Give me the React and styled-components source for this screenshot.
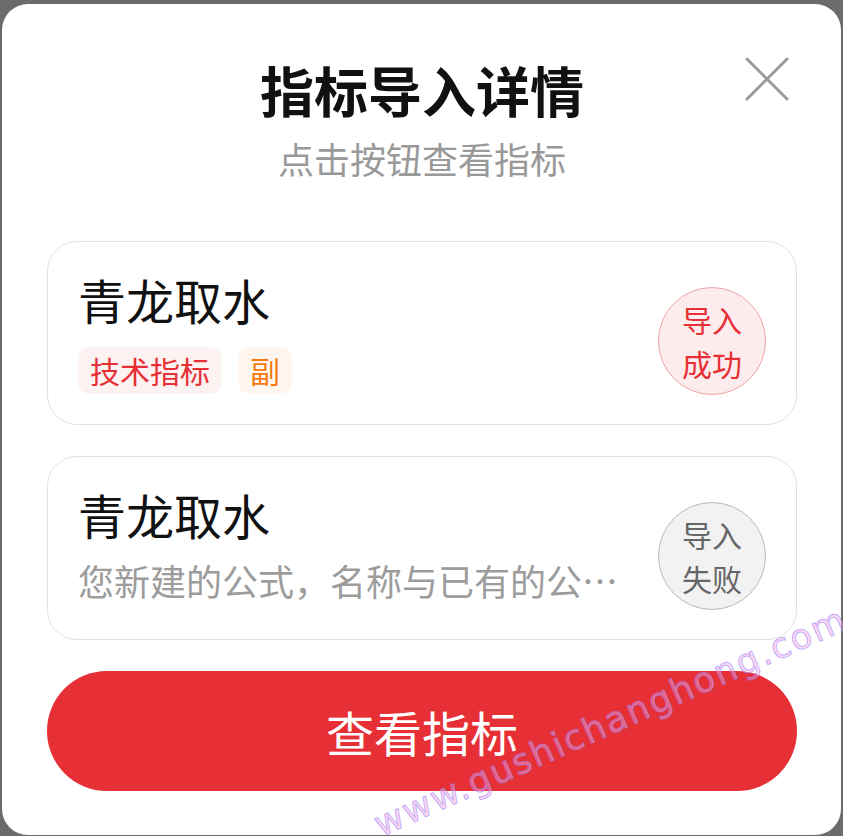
import styled, { createGlobalStyle } from 'styled-components';

const GlobalStyle = createGlobalStyle`
  html, body {
    margin: 0;
    padding: 0;
    background: #6b6b6b;
  }
  * {
    box-sizing: border-box;
  }
  body {
    font-family: "Noto Sans CJK SC", "Noto Sans", sans-serif;
  }
`

const Overlay = styled.div`
  width: 843px;
  height: 836px;
  padding: 4px 2px 1px;
  overflow: hidden;
  position: relative;
`

const Modal = styled.div`
  position: relative;
  background: #fff;
  border-radius: 26px;
  padding: 56px 44px 44px 45px;
  display: flex;
  flex-direction: column;
  align-items: stretch;
  overflow: hidden;
`

const Title = styled.h2`
  margin: 0;
  text-align: center;
  font-size: 54px;
  line-height: 60px;
  font-weight: 700;
  color: #111;
`

const Subtitle = styled.p`
  margin: 16px 0 61px;
  text-align: center;
  font-size: 36px;
  line-height: 44px;
  color: #999;
`

const CloseButton = styled.button`
  position: absolute;
  top: 53px;
  right: 52px;
  width: 44px;
  height: 44px;
  padding: 0;
  border: none;
  background: none;
  cursor: pointer;
  svg {
    display: block;
  }
`

const List = styled.div`
  display: flex;
  flex-direction: column;
  gap: 31px;
`

const Card = styled.div`
  height: 184px;
  border: 1px solid #e0e0e0;
  border-radius: 30px;
  padding: 0 30px;
  display: flex;
  align-items: center;
  gap: 30px;
`

const Info = styled.div`
  flex: 1;
  min-width: 0;
  align-self: flex-start;
  padding-top: 29px;
  display: flex;
  flex-direction: column;
`

const Name = styled.div`
  font-size: 48px;
  line-height: 56px;
  color: #111;
`

const Tags = styled.div`
  display: flex;
  gap: 16px;
  margin-top: 20px;
`

const Tag = styled.span`
  height: 47px;
  padding: 0 12px;
  border-radius: 12px;
  font-size: 30px;
  line-height: 47px;
  color: ${p => (p.$tone === 'orange' ? '#f57a10' : '#e63035')};
  background: ${p => (p.$tone === 'orange' ? '#fff6ef' : '#fdf2f2')};
`

const Desc = styled.div`
  margin-top: 18px;
  font-size: 36px;
  line-height: 40px;
  color: #9c9c9c;
  white-space: nowrap;
  overflow: hidden;
  text-overflow: ellipsis;
`

const Status = styled.div`
  flex: none;
  margin-top: 16px;
  width: 108px;
  height: 108px;
  border-radius: 50%;
  display: flex;
  flex-direction: column;
  align-items: center;
  justify-content: center;
  font-size: 30px;
  line-height: 44px;
  color: ${p => (p.$ok ? '#e63035' : '#666')};
  background: ${p => (p.$ok ? '#fdeced' : '#f2f2f2')};
  border: 1px solid ${p => (p.$ok ? '#f2a3a5' : '#b8b8b8')};
`

const MainButton = styled.button`
  margin-top: 31px;
  height: 120px;
  border: none;
  border-radius: 60px;
  background: #e63035;
  color: #fff;
  font-family: inherit;
  font-size: 48px;
  cursor: pointer;
`

const Watermark = styled.div`
  position: absolute;
  left: 376px;
  top: 806px;
  transform: rotate(-24deg);
  transform-origin: left center;
  font-family: "DejaVu Sans", sans-serif;
  font-size: 35px;
  font-weight: 400;
  letter-spacing: 2px;
  color: rgba(255, 170, 220, 0.45);
  -webkit-text-stroke: 1px rgba(150, 130, 255, 0.6);
  pointer-events: none;
  white-space: nowrap;
`

const items = [
  { name: '青龙取水', ok: true, tags: [{ text: '技术指标', tone: 'red' }, { text: '副', tone: 'orange' }] },
  { name: '青龙取水', ok: false, desc: '您新建的公式，名称与已有的公式重复，请修改后重新导入' },
]

export default function App() {
  return <>
    <GlobalStyle />
    <Overlay>
      <Modal>
        <CloseButton aria-label="关闭">
          <svg width="44" height="44" viewBox="0 0 44 44">
            <path d="M2 2L42 42M42 2L2 42" stroke="#9a9a9a" strokeWidth="3" strokeLinecap="round" />
          </svg>
        </CloseButton>
        <Title>指标导入详情</Title>
        <Subtitle>点击按钮查看指标</Subtitle>
        <List>
          {items.map((item, i) => (
            <Card key={i}>
              <Info>
                <Name>{item.name}</Name>
                {item.tags && (
                  <Tags>
                    {item.tags.map(t => <Tag key={t.text} $tone={t.tone}>{t.text}</Tag>)}
                  </Tags>
                )}
                {item.desc && <Desc>{item.desc}</Desc>}
              </Info>
              <Status $ok={item.ok}>
                <span>导入</span>
                <span>{item.ok ? '成功' : '失败'}</span>
              </Status>
            </Card>
          ))}
        </List>
        <MainButton>查看指标</MainButton>
      </Modal>
      <Watermark>www.gushichanghong.com</Watermark>
    </Overlay>
  </>
}
